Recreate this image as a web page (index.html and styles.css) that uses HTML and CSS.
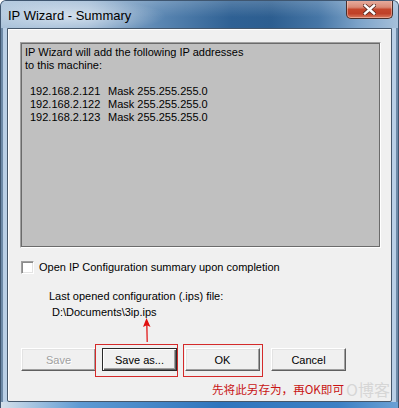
FILE: index.html
```html
<!DOCTYPE html>
<html>
<head>
<meta charset="utf-8">
<link rel="stylesheet" href="styles.css">
</head>
<body>
<div class="window">
  <div class="titlebar">
    <span class="title">IP Wizard - Summary</span>
    <div class="close">
      <svg width="13" height="11" viewBox="0 0 13 11">
        <path d="M2 1.5 L11 9.5 M11 1.5 L2 9.5" stroke="#5a2b22" stroke-width="4" stroke-linecap="square" fill="none"/>
        <path d="M2 1.5 L11 9.5 M11 1.5 L2 9.5" stroke="#ffffff" stroke-width="2.4" stroke-linecap="square" fill="none"/>
      </svg>
    </div>
  </div>
  <div class="frame">
    <div class="client">
      <div class="listbox">
        <p class="line">IP Wizard will add the following IP addresses</p>
        <p class="line">to this machine:</p>
        <p class="line blank"></p>
        <div class="iprow"><span class="ip">192.168.2.121</span><span>Mask 255.255.255.0</span></div>
        <div class="iprow"><span class="ip">192.168.2.122</span><span>Mask 255.255.255.0</span></div>
        <div class="iprow"><span class="ip">192.168.2.123</span><span>Mask 255.255.255.0</span></div>
      </div>
      <div class="check"><span class="box"></span><span class="check-label">Open IP Configuration summary upon completion</span></div>
      <div class="lastinfo">Last opened configuration (.ips) file:</div>
      <div class="path">D:\Documents\3ip.ips</div>
      <div class="buttons">
        <div class="btn disabled">Save</div>
        <div class="btn default btn-saveas">Save as...</div>
        <div class="btn btn-ok">OK</div>
        <div class="btn btn-cancel">Cancel</div>
      </div>
      <div class="redbox redbox-saveas"></div>
      <div class="redbox redbox-ok"></div>
      <svg class="arrow" width="14" height="26" viewBox="0 0 14 26">
        <path d="M6.5 1 L10.5 10 L7.5 8.5 L7.8 25 L6.6 25 L6.2 8.5 L3 10 Z" fill="#e01010"/>
      </svg>
      <div class="annotation">
        <span class="note">先将此另存为，再OK即可</span>
        <span class="watermark">O博客</span>
      </div>
    </div>
  </div>
</div>
</body>
</html>
```

FILE: styles.css
```css
html, body {
  margin: 0;
  padding: 0;
  background: #ffffff;
}

body {
  width: 399px;
  height: 408px;
  overflow: hidden;
  font-family: "Liberation Sans", Arial, sans-serif;
  font-size: 11px;
  color: #000;
}

.window {
  width: 399px;
  height: 408px;
  box-sizing: border-box;
  display: flex;
  flex-direction: column;
  border-radius: 6px 6px 0 0;
  overflow: hidden;
  background: #7fa3c8;
  border: 1px solid #3f5670;
  border-bottom: none;
}

.titlebar {
  height: 27px;
  flex: 0 0 27px;
  display: flex;
  align-items: flex-start;
  background:
    radial-gradient(ellipse 95px 17px at 70px 15px, rgba(255,255,255,0.55), rgba(255,255,255,0) 100%),
    linear-gradient(to bottom, rgba(255,255,255,0.18), rgba(255,255,255,0) 60%),
    linear-gradient(to right, #a9c2da 0%, #9ab6d3 22%, #5a86b2 40%, #2f6194 58%, #2d5e90 68%, #4676a6 80%, #7ca3c9 90%, #a6c0da 100%);
}

.title {
  font-size: 13px;
  line-height: 14px;
  margin: 8px 0 0 7px;
  color: #000;
  white-space: nowrap;
}

.close {
  margin-left: auto;
  margin-right: 5px;
  margin-top: -1px;
  width: 47px;
  height: 19px;
  box-sizing: border-box;
  border: 1px solid #4a2e2a;
  border-top: none;
  border-radius: 0 0 5px 5px;
  display: flex;
  align-items: center;
  justify-content: center;
  background: linear-gradient(to bottom, #e8b0a2 0%, #d98a76 40%, #c4462c 52%, #bf4028 75%, #d97a5e 100%);
  box-shadow: inset 0 0 0 1px rgba(255,220,210,0.45);
}

.frame {
  flex: 1;
  display: flex;
  padding: 0 6px 6px 6px;
  background:
    linear-gradient(to right, #d5e0ea 0%, #5e9ad3 20%, #2f75bd 55%, #3d80c4 85%, #6aa0d4 100%) bottom / 100% 6px no-repeat,
    linear-gradient(to right, #6d8aa8 0px, #6d8aa8 2px, #b9cfe6 2px, #b9cfe6 6px, transparent 6px) left top / 7px 100% no-repeat,
    linear-gradient(to left, #6d8aa8 0px, #6d8aa8 2px, #b9cfe6 2px, #b9cfe6 6px, transparent 6px) right top / 7px 100% no-repeat,
    #a9c4df;
}

.client {
  flex: 1;
  position: relative;
  background: #f0f0f0;
  border: 1px solid #45576b;
  box-shadow: inset 1px 1px 0 #ffffff;
  display: flex;
  flex-direction: column;
  border-radius: 0 0 2px 2px;
}

.listbox {
  margin: 13px 0 0 12px;
  width: 361px;
  height: 206px;
  box-sizing: border-box;
  background: #c0c0c0;
  border-style: solid;
  border-width: 1px;
  border-color: #a0a0a0 #ffffff #ffffff #a0a0a0;
  box-shadow: inset 0 0 0 1px #6b6b6b;
  padding: 3px 0 0 4px;
}

.line {
  margin: 0;
  line-height: 13px;
  height: 13px;
  white-space: nowrap;
}

.iprow {
  display: flex;
  line-height: 13px;
  height: 13px;
  padding-left: 5px;
  white-space: nowrap;
}

.ip {
  width: 78px;
}

.check {
  display: flex;
  align-items: center;
  margin: 13px 0 0 13px;
  height: 13px;
}

.box {
  width: 13px;
  height: 13px;
  box-sizing: border-box;
  background: #ffffff;
  border-style: solid;
  border-width: 1px;
  border-color: #a0a0a0 #ffffff #ffffff #a0a0a0;
  box-shadow: inset 1px 1px 0 #8a8a8a, inset -1px -1px 0 #e3e3e3;
}

.check-label {
  margin-left: 5px;
  line-height: 13px;
  white-space: nowrap;
}

.lastinfo {
  margin: 16px 0 0 41px;
  line-height: 13px;
  white-space: nowrap;
}

.path {
  margin: 3px 0 0 44px;
  line-height: 13px;
  white-space: nowrap;
}

.buttons {
  display: flex;
  margin: 29px 0 0 13px;
}

.btn {
  width: 75px;
  height: 23px;
  box-sizing: border-box;
  display: flex;
  align-items: center;
  justify-content: center;
  background: #f0f0f0;
  border-style: solid;
  border-width: 1px;
  border-color: #ffffff #5f5f5f #5f5f5f #ffffff;
  box-shadow: inset -1px -1px 0 #a0a0a0, inset 1px 1px 0 #e3e3e3;
  white-space: nowrap;
}

.btn.disabled {
  color: #a0a0a0;
  text-shadow: 1px 1px 0 #ffffff;
}

.btn.default {
  border: 1px solid #2a2a2a;
  box-shadow: inset 1px 1px 0 #ffffff, inset -1px -1px 0 #5f5f5f, inset -2px -2px 0 #a0a0a0;
}

.btn-saveas {
  margin-left: 6px;
}

.btn-ok {
  margin-left: 8px;
}

.btn-cancel {
  margin-left: 11px;
}

.redbox {
  position: absolute;
  border: 1px solid #d42a2a;
  box-sizing: border-box;
  height: 33px;
  top: 315px;
}

.redbox-saveas {
  left: 87px;
  width: 83px;
}

.redbox-ok {
  left: 175px;
  width: 80px;
}

.arrow {
  position: absolute;
  left: 132px;
  top: 288px;
}

.annotation {
  position: absolute;
  left: 204px;
  top: 351px;
  display: flex;
  align-items: center;
  gap: 2px;
  height: 18px;
  white-space: nowrap;
}

.note {
  font-family: "Noto Sans CJK SC", sans-serif;
  font-size: 11.6px;
  line-height: 16px;
  color: #c81414;
}

.watermark {
  font-family: "Noto Sans CJK SC", "Liberation Sans", sans-serif;
  font-size: 16px;
  line-height: 18px;
  color: #d6d6d6;
}
```
